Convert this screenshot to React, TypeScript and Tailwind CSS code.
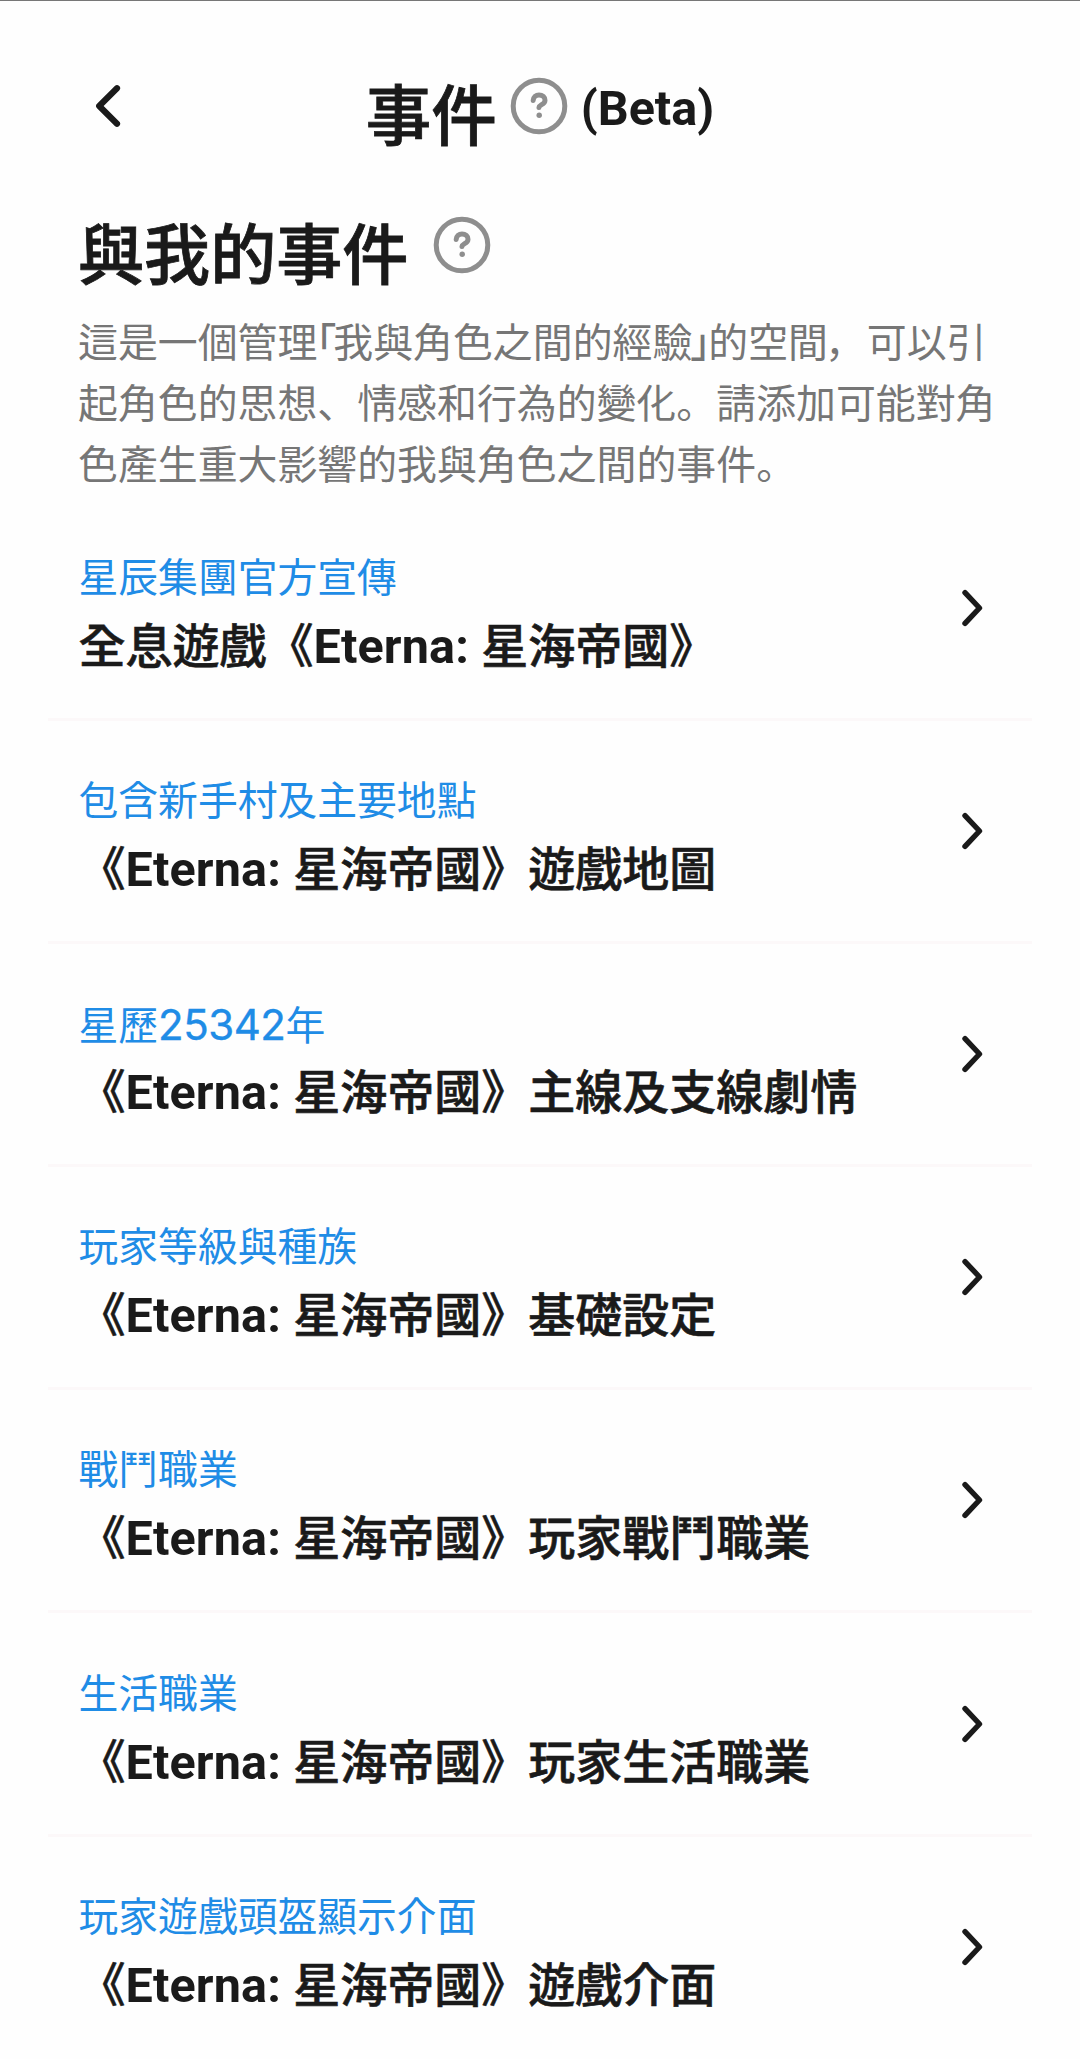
import React from 'react';

type EventItem = {
  date: React.ReactNode;
  prefix?: string;
  suffix?: string;
};

const events: EventItem[] = [
  { date: '星辰集團官方宣傳', prefix: '全息遊戲' },
  { date: '包含新手村及主要地點', suffix: '遊戲地圖' },
  {
    date: (
      <>
        星歷<span className="font-['Inter'] text-[42px] tracking-[-0.5px] [-webkit-text-stroke:0.4px_#1f8ce6]">25342</span>年
      </>
    ),
    suffix: '主線及支線劇情',
  },
  { date: '玩家等級與種族', suffix: '基礎設定' },
  { date: '戰鬥職業', suffix: '玩家戰鬥職業' },
  { date: '生活職業', suffix: '玩家生活職業' },
  { date: '玩家遊戲頭盔顯示介面', suffix: '遊戲介面' },
];

const HelpIcon = () => (
  <svg width="58" height="58" viewBox="0 0 58 58" fill="none" stroke="#8e8e8e" strokeLinecap="round">
    <circle cx="29" cy="29" r="25.8" strokeWidth="5" />
    <path
      d="M23.2 23.4C23.4 20 26 17.900 29 17.900c3.500 0 6 2.300 6 5.300 0 4.500-5.700 4.300-6 7.300"
      strokeWidth="5"
      strokeLinejoin="round"
    />
    <circle cx="29.2" cy="38.200" r="2.700" fill="#8e8e8e" stroke="none" />
  </svg>
);

const EventRow: React.FC<EventItem> = ({ date, prefix, suffix }) => (
  <li className="flex h-[223.1px] shrink-0 items-center justify-between border-b-[3px] border-[#fcf8f9] pr-[49px] pl-[30.5px] last:border-transparent">
    <div className="flex flex-col pt-[12px] whitespace-nowrap">
      <span className="h-[60px] text-[39.8px] leading-[60px] text-[#1f8ce6]">{date}</span>
      <span className="mt-[6px] text-[47px] leading-[64px] font-medium [-webkit-text-stroke:0.6px_#1a1a1a]">
        {prefix}《<span className="text-[48.5px] font-bold tracking-[0.15px] [-webkit-text-stroke:0]">Eterna: </span>
        星海帝國》{suffix}
      </span>
    </div>
    <svg
      width="22"
      height="38"
      viewBox="0 0 22 38"
      fill="none"
      stroke="#1a1a1a"
      strokeWidth="5.4"
      strokeLinecap="round"
      strokeLinejoin="round"
    >
      <path d="M4 3.600 18.500 19 4 34.400" />
    </svg>
  </li>
);

export default function App() {
  return (
    <div
      lang="ko"
      className="flex h-[2059px] w-[1080px] flex-col overflow-hidden border-t border-[#777] bg-[#fefefe] font-['Roboto','Noto_Sans_CJK_KR',sans-serif] text-[#1a1a1a]"
    >
      <header className="grid h-[193px] shrink-0 grid-cols-[270px_540px_270px] items-center pt-[16px]">
        <button className="pl-[95px]">
          <svg
            width="26"
            height="44"
            viewBox="0 0 26 44"
            fill="none"
            stroke="#1a1a1a"
            strokeWidth="6.2"
            strokeLinecap="round"
            strokeLinejoin="round"
          >
            <path d="M22 4.200 4.200 22 22 39.800" />
          </svg>
        </button>
        <h1 className="flex h-[90px] items-center justify-center font-medium">
          <span className="mt-[24px] text-[65.5px] leading-[90px] [-webkit-text-stroke:0.8px_#1a1a1a]">事件</span>
          <span className="ml-[13px]">
            <HelpIcon />
          </span>
          <span className="mt-[7px] ml-[13px] text-[48.5px] font-bold">(Beta)</span>
        </h1>
      </header>

      <section className="h-[304px] shrink-0 px-[78px]">
        <h2 className="flex h-[119px] items-center font-medium">
          <span className="mt-[6px] text-[66.1px] leading-[90px] [-webkit-text-stroke:0.8px_#1a1a1a]">與我的事件</span>
          <span className="mb-[17px] ml-[25px]">
            <HelpIcon />
          </span>
        </h2>
        <p className="text-[39.9px] leading-[61px] whitespace-nowrap text-[#767676]">
          這是一個管理<span className="-mr-[3px] -ml-[1px] font-medium [font-feature-settings:'halt']">「</span>
          我與角色之間的經驗
          <span className="-mr-[2px] -ml-[2px] font-medium [font-feature-settings:'halt']">」</span>的空間
          <span className="mr-[2px] -ml-[3px]">，</span>可以引
          <br />
          起角色的思想、情感和行為的變化。請添加可能對角
          <br />
          色產生重大影響的我與角色之間的事件。
        </p>
      </section>

      <ul className="flex flex-col px-12">
        {events.map((event, index) => (
          <EventRow key={index} {...event} />
        ))}
      </ul>
    </div>
  );
}
